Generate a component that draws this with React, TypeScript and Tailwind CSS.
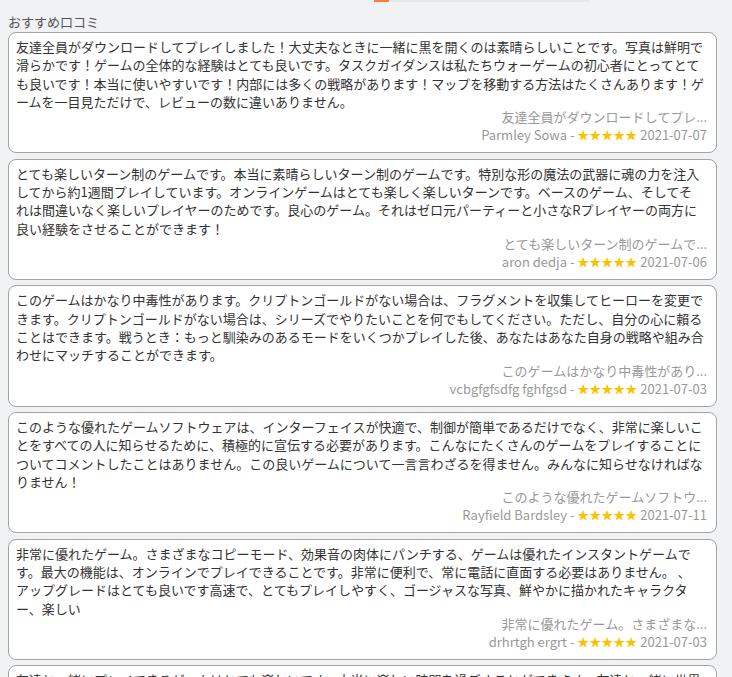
const reviews = [
  {
    lines: [
      "友達全員がダウンロードしてプレイしました！大丈夫なときに一緒に黒を開くのは素晴らしいことです。写真は鮮明で",
      "滑らかです！ゲームの全体的な経験はとても良いです。タスクガイダンスは私たちウォーゲームの初心者にとってとて",
      "も良いです！本当に使いやすいです！内部には多くの戦略があります！マップを移動する方法はたくさんあります！ゲ",
      "ームを一目見ただけで、レビューの数に違いありません。",
    ],
    snippet: "友達全員がダウンロードしてプレ...",
    name: "Parmley Sowa",
    date: "2021-07-07",
  },
  {
    lines: [
      "とても楽しいターン制のゲームです。本当に素晴らしいターン制のゲームです。特別な形の魔法の武器に魂の力を注入",
      "してから約1週間プレイしています。オンラインゲームはとても楽しく楽しいターンです。ベースのゲーム、そしてそ",
      "れは間違いなく楽しいプレイヤーのためです。良心のゲーム。それはゼロ元パーティーと小さなRプレイヤーの両方に",
      "良い経験をさせることができます！",
    ],
    snippet: "とても楽しいターン制のゲームで...",
    name: "aron dedja",
    date: "2021-07-06",
  },
  {
    lines: [
      "このゲームはかなり中毒性があります。クリプトンゴールドがない場合は、フラグメントを収集してヒーローを変更で",
      "きます。クリプトンゴールドがない場合は、シリーズでやりたいことを何でもしてください。ただし、自分の心に賴る",
      "ことはできます。戦うとき：もっと馴染みのあるモードをいくつかプレイした後、あなたはあなた自身の戦略や組み合",
      "わせにマッチすることができます。",
    ],
    snippet: "このゲームはかなり中毒性があり...",
    name: "vcbgfgfsdfg fghfgsd",
    date: "2021-07-03",
  },
  {
    lines: [
      "このような優れたゲームソフトウェアは、インターフェイスが快適で、制御が簡単であるだけでなく、非常に楽しいこ",
      "とをすべての人に知らせるために、積極的に宣伝する必要があります。こんなにたくさんのゲームをプレイすることに",
      "ついてコメントしたことはありません。この良いゲームについて一言言わざるを得ません。みんなに知らせなければな",
      "りません！",
    ],
    snippet: "このような優れたゲームソフトウ...",
    name: "Rayfield Bardsley",
    date: "2021-07-11",
  },
  {
    lines: [
      "非常に優れたゲーム。さまざまなコピーモード、効果音の肉体にパンチする、ゲームは優れたインスタントゲームで",
      "す。最大の機能は、オンラインでプレイできることです。非常に便利で、常に電話に直面する必要はありません。 、",
      "アップグレードはとても良いです高速で、とてもプレイしやすく、ゴージャスな写真、鮮やかに描かれたキャラクタ",
      "ー、楽しい",
    ],
    snippet: "非常に優れたゲーム。さまざまな...",
    name: "drhrtgh ergrt",
    date: "2021-07-03",
  },
  {
    lines: [
      "友達と一緒にプレイできるゲームはとても楽しいです。本当に楽しい時間を過ごすことができます。友達と一緒に世界",
      "を冒険するのはとても楽しいです。",
    ],
    snippet: "友達と一緒にプレイできるゲーム...",
    name: "kelly mars",
    date: "2021-07-02",
  },
];

const font = "font-['Noto_Sans_CJK_JP','Noto_Sans',sans-serif]";

function ReviewCard({ r }: { r: (typeof reviews)[number] }) {
  return (
    <div className="w-[709px] shrink-0 rounded-[8px] border border-[#a3a3a3] bg-white pt-[5px] pb-[8px] pl-[7px] pr-[9px]">
      <p className="min-h-[73px] text-[13px] leading-[18.3px] text-[#333]">
        {r.lines.map((l, i) => (
          <span key={i} className="block whitespace-nowrap">
            {l}
          </span>
        ))}
      </p>
      <div className="text-right text-[13px] text-[#999]">
        <div className="leading-[12px]">{r.snippet}</div>
        <div className="mt-[3px] leading-[18px]">
          {r.name} - <span className="text-[12px] text-[#fcc200]">★★★★★</span> {r.date}
        </div>
      </div>
    </div>
  );
}

export default function App() {
  return (
    <div className={`h-[677px] overflow-hidden bg-[#f1f2f4] ${font}`}>
      <div className="flex h-[2px] pl-[374px]">
        <div className="w-[15px] bg-[#ff7a3d]" />
        <div className="w-[200px] bg-[#e5e6e9]" />
      </div>
      <h2 className="mt-[11px] pl-[8px] text-[13px] font-normal leading-[18px] text-[#555]">おすすめ口コミ</h2>
      <div className="mt-[1px] flex flex-col gap-[5.5px] pl-[8px]">
        {reviews.map((r, i) => (
          <ReviewCard key={i} r={r} />
        ))}
      </div>
    </div>
  );
}
